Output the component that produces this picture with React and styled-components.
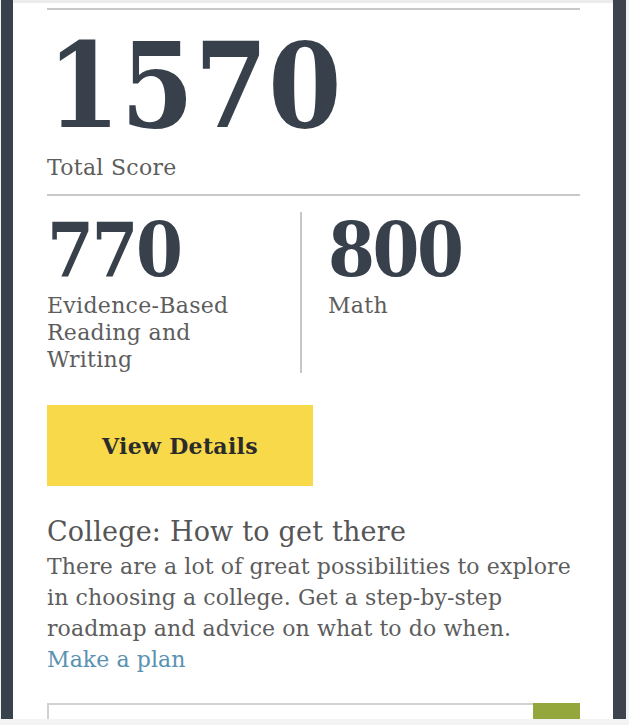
import React from "react";
import styled, { createGlobalStyle } from "styled-components";

const Global = createGlobalStyle`
  html, body { margin: 0; padding: 0; background: #f3f3f3; }
  body { font-family: "DejaVu Serif", serif; }
`;

const Frame = styled.div`
  box-sizing: border-box;
  margin-left: 1px;
  width: 625px;
  height: 719px;
  border-left: 12px solid #38424c;
  border-right: 13px solid #3d444e;
  background: #fff;
  overflow: hidden;
`;

const Card = styled.div`
  border-top: 3px solid #ececec;
  padding: 5px 33px 0 34px;
  display: flex;
  flex-direction: column;
`;

const Rule = styled.hr`
  margin: 0;
  border: 0;
  border-top: 2px solid #c9c9c9;
`;

const BigScore = styled.div`
  font-family: "DejaVu Serif Condensed", "DejaVu Serif", serif;
  font-stretch: condensed;
  font-weight: 700;
  font-size: 117px;
  line-height: 90px;
  letter-spacing: 0.5px;
  color: #38414b;
  margin-top: 31px;
`;

const Label = styled.div`
  font-family: "DejaVu Serif", serif;
  font-size: 22px;
  line-height: 27px;
  color: #5d5d5d;
  letter-spacing: 0.3px;
`;

const TotalLabel = styled(Label)`
  margin-top: 23px;
  margin-bottom: 13px;
`;

const Sections = styled.div`
  display: grid;
  grid-template-columns: 253px 1fr;
  margin-top: 16px;
`;

const Section = styled.div`
  padding-left: ${(p) => (p.$divided ? "26px" : "0")};
  border-left: ${(p) => (p.$divided ? "2px solid #c6c6c6" : "none")};
  min-height: 160px;
`;

const SubScore = styled.div`
  font-family: "DejaVu Serif Condensed", "DejaVu Serif", serif;
  font-stretch: condensed;
  font-weight: 700;
  font-size: 75px;
  line-height: 60px;
  letter-spacing: -2.5px;
  color: #38414b;
  margin-top: 8px;
  margin-bottom: 12px;
`;

const Button = styled.button`
  margin-top: 32px;
  width: 266px;
  height: 81px;
  background: #f7d94a;
  border: 0;
  font-family: "DejaVu Serif", serif;
  font-weight: 700;
  font-size: 22px;
  color: #2b2b2b;
  letter-spacing: 0.3px;
  cursor: pointer;
`;

const Heading = styled.div`
  margin-top: 30px;
  font-family: "DejaVu Serif", serif;
  font-size: 27px;
  line-height: 32px;
  color: #555;
  letter-spacing: 0.2px;
`;

const Para = styled.p`
  margin: 3px 0 0;
  font-family: "DejaVu Serif", serif;
  font-size: 22px;
  line-height: 31px;
  color: #5d5d5d;
  letter-spacing: 0.1px;
`;

const Link = styled.a`
  color: #5a92b2;
  text-decoration: none;
`;

const SearchRow = styled.div`
  display: flex;
  margin-top: 28px;
  height: 20px;
`;

const Input = styled.div`
  flex: 1;
  border: 2px solid #d2d2d2;
  border-right: 0;
  border-bottom: 0;
`;

const Go = styled.div`
  width: 47px;
  background: #93a73d;
`;

export default function App() {
  return (
    <>
      <Global />
      <Frame>
        <Card>
          <Rule />
          <BigScore>1570</BigScore>
          <TotalLabel>Total Score</TotalLabel>
          <Rule />
          <Sections>
            <Section>
              <SubScore>770</SubScore>
              <Label>
                Evidence-Based
                <br />
                Reading and
                <br />
                Writing
              </Label>
            </Section>
            <Section $divided>
              <SubScore>800</SubScore>
              <Label>Math</Label>
            </Section>
          </Sections>
          <Button>View Details</Button>
          <Heading>College: How to get there</Heading>
          <Para>
            There are a lot of great possibilities to explore in choosing a
            college. Get a step-by-step roadmap and advice on what to do when.
            <br />
            <Link href="#">Make a plan</Link>
          </Para>
          <SearchRow>
            <Input />
            <Go />
          </SearchRow>
        </Card>
      </Frame>
    </>
  );
}
